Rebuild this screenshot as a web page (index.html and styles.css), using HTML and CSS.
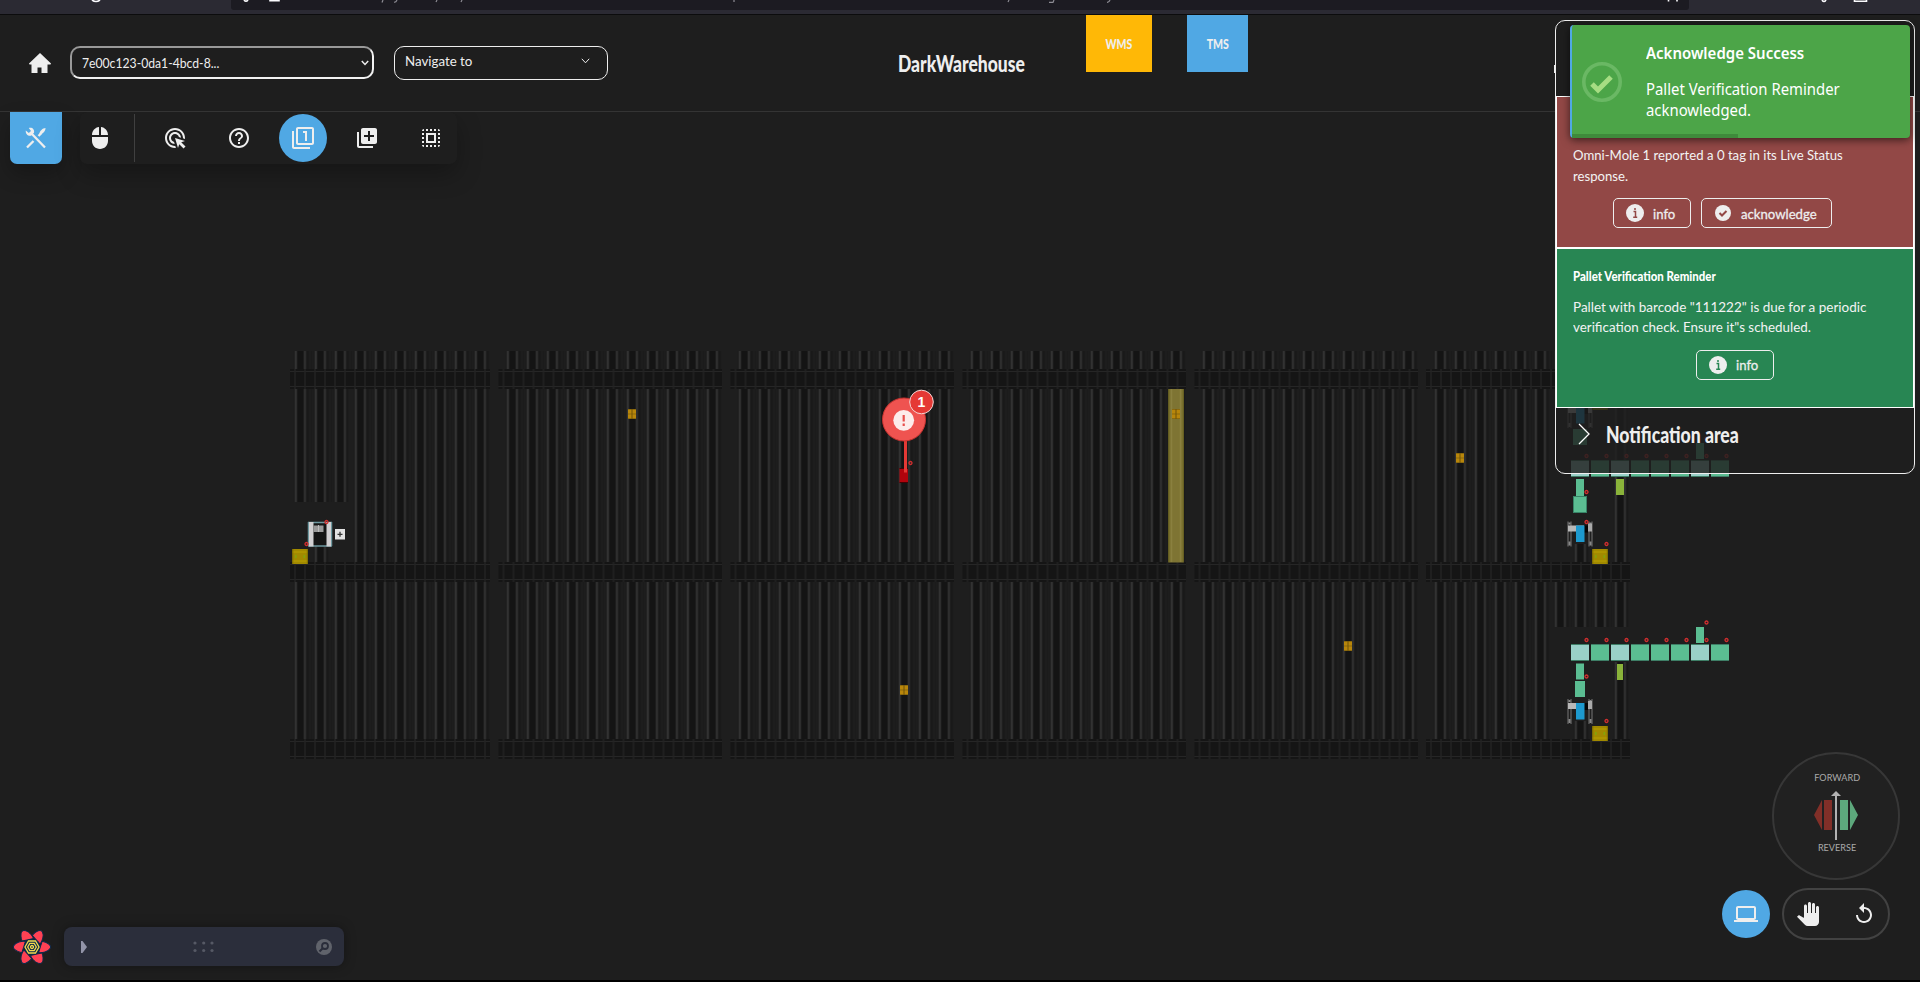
FILE: index.html
```html
<!DOCTYPE html>
<html lang="en">
<head>
<meta charset="utf-8">
<title>DarkWarehouse</title>
<link rel="stylesheet" href="styles.css">
</head>
<body>
<div class="chrome">
  <svg class="chrome-art" width="1920" height="15" viewBox="0 0 1920 15">
    <path class="bar" d="M231 0h1458v7q0 3-3 3H234q-3 0-3-3z"/>
    <g fill="none" stroke="#fbfbfe" stroke-width="1.6"><path d="M92 0q4 3 8 0M270 0v.8h9V0M244 0q2 2.5 4 0M1822 0q2 3 4 0M1854.500 0v1.200h12V0M1668.500 0v1.500M1677 0v1.500"/></g>
    <g fill="none" stroke="#8d8c94" stroke-width="1.200"><path d="M383 0l-1 2.500M397 0q-1 2.500-3 2.200M437 0l-1 2M462 0l-1 2M734 0v2M1009 0l-1 2M1049 2.400h4l1-2.400M1110 0q-1 2.500-3 2.300"/></g>
  </svg>
</div>

<svg class="map" width="1920" height="982" viewBox="0 0 1920 982">
  <defs>
    <pattern id="rail" patternUnits="userSpaceOnUse" x="0" y="0" width="20" height="40">
      <rect width="15.500" height="40" fill="#191919"/><rect x="3" width="8.500" height="40" fill="#141414"/>
      <rect x="1.500" width="1.800" height="40" fill="#3a3a3a"/><rect x="10.500" width="1.800" height="40" fill="#363636"/>
      <rect x="17" width="2" height="40" fill="#1b1b1b"/>
    </pattern>
    <pattern id="aisle" patternUnits="userSpaceOnUse" width="10" height="20">
      <rect width="10" height="20" fill="#151515"/>
      <path d="M0 2.500h10M0 17.500h10" stroke="#262626"/><path d="M5 0v20" stroke="#232323" stroke-width="1.400"/>
    </pattern>
    <g id="band"><rect width="223.500" height="20" fill="url(#aisle)"/></g>
    <g id="rows">
      <rect y="0" width="216" height="18" fill="url(#rail)"/>
      <rect y="38" width="216" height="173" fill="url(#rail)"/>
      <rect y="231" width="216" height="157" fill="url(#rail)"/>
      <use href="#band" x="-7" y="18"/><use href="#band" x="-7" y="211"/><use href="#band" x="-7" y="388"/>
    </g>
    <g id="crate"><rect width="8" height="10" fill="#b8860b"/><path d="M0 .5h8M0 9.500h8M0 5h8" stroke="#8d6a0c"/><path d="M4 0v10" stroke="#6f5208"/></g>
    <g id="pallet"><rect width="15.500" height="15" fill="#a28a00"/><path d="M0 3h15.500M0 12h15.500" stroke="#b89f00"/><path d="M3.500 6v3M12 6v3" stroke="#82a50c" stroke-width="1.500"/><path d="M.5 0v15M15 0v15" stroke="#806e00"/></g>
    <g id="tag"><circle r="1.500" fill="none" stroke="#d12f2f" stroke-width="1.300"/></g>
    <g id="lift">
      <path d="M1 0v25M4 0v25M22 0v25M25 0v25" stroke="#636363" stroke-width="1.300"/>
      <path d="M2.500 1v2M2.500 20v4M23.500 1v2M23.500 20v4" stroke="#888" stroke-width="2"/>
      <rect x="1" y="4" width="16" height="6" fill="#b8b8b8"/><rect x="21" y="2" width="4" height="8" fill="#aaa"/>
      <rect x="17" y="4" width="4" height="7" fill="#050505"/><rect x="9" y="4" width="8.500" height="16.500" fill="#1d99ce"/>
    </g>
    <g id="conveyor">
      <g stroke="#3e7e66" stroke-width="1"><g fill="#9ad0c8" stroke="none"><rect x="0" y="0" width="18" height="16"/><rect x="40" y="0" width="18" height="16"/><rect x="120" y="0" width="18" height="16"/></g>
      <g fill="#5bbd92" stroke="none"><rect x="20" y="0" width="18" height="16"/><rect x="60" y="0" width="18" height="16"/><rect x="80" y="0" width="18" height="16"/><rect x="100" y="0" width="18" height="16"/><rect x="140" y="0" width="18" height="16"/></g>
      <path d="M0 .5h18M20 .5h18M40 .5h18M60 .5h18M80 .5h18M100 .5h18M120 .5h18M140 .5h18M0 16.500h18M20 16.500h18M40 16.500h18M60 16.500h18M80 16.500h18M100 16.500h18M120 16.500h18M140 16.500h18"/></g>
      <rect x="125" y="-17" width="8" height="16" fill="#5bbd92"/>
      <use href="#tag" x="15.500" y="-4"/><use href="#tag" x="35.500" y="-4"/><use href="#tag" x="55.500" y="-4"/><use href="#tag" x="75.500" y="-4"/><use href="#tag" x="95.500" y="-4"/><use href="#tag" x="115.500" y="-4"/><use href="#tag" x="135.500" y="-4"/><use href="#tag" x="155.500" y="-4"/><use href="#tag" x="135.500" y="-21.500"/>
    </g>
  </defs>

  <!-- storage blocks -->
  <use href="#rows" x="505.500" y="351"/>
  <use href="#rows" x="737.500" y="351"/>
  <use href="#rows" x="969.500" y="351"/>
  <use href="#rows" x="1201.500" y="351"/>

  <g transform="translate(293.500 351)">
    <g fill="url(#rail)"><rect width="196" height="18"/><rect y="38" width="55" height="113"/><rect x="60" y="38" width="136" height="173"/><rect y="231" width="196" height="157"/><rect x="20" y="195" width="15" height="20"/></g>
    <g transform="translate(-3.500 18)"><rect width="200" height="20" fill="url(#aisle)"/></g>
    <g transform="translate(-3.500 211)"><rect width="200" height="20" fill="url(#aisle)"/></g>
    <g transform="translate(-3.500 388)"><rect width="200" height="20" fill="url(#aisle)"/></g>
  </g>

  <g transform="translate(1433.500 351)">
    <g fill="url(#rail)"><rect width="196" height="18"/><rect y="38" width="116" height="173"/><rect x="180" y="38" width="15" height="173"/><rect y="231" width="116" height="157"/><rect x="120" y="231" width="75" height="45"/><rect x="180" y="311" width="15" height="77"/><rect x="140" y="193" width="15" height="20"/><rect x="140" y="370" width="15" height="20"/></g>
    <g transform="translate(-7.500 18)"><rect width="204" height="20" fill="url(#aisle)"/></g>
    <g transform="translate(-7.500 211)"><rect width="204" height="20" fill="url(#aisle)"/></g>
    <g transform="translate(-7.500 388)"><rect width="204" height="20" fill="url(#aisle)"/></g>
  </g>

  <!-- highlighted lane and stored crates -->
  <rect x="1168.300" y="389" width="15.500" height="173.500" fill="#7e7433"/>
  <path d="M1171.500 389v173M1180.500 389v173" stroke="#8a803f" stroke-width="1.500"/><path d="M1168.800 389v173M1183.300 389v173" stroke="#666020"/>
  <use href="#crate" x="628" y="409"/><use href="#crate" x="1172" y="409"/><use href="#crate" x="900" y="685"/><use href="#crate" x="1344" y="641"/><use href="#crate" x="1456" y="453"/>

  <!-- left lift -->
  <use href="#pallet" x="292.300" y="549"/>
  <rect x="308" y="522" width="24" height="24" fill="#151515"/><path d="M308 522.500h24M308 546h24M308.500 522v24M331.500 522v24" stroke="#6c979e" stroke-width="1.500"/>
  <rect x="309" y="522" width="4.500" height="24.500" fill="#d2d0d2"/><rect x="326.500" y="522" width="4.500" height="24.500" fill="#d2d0d2"/>
  <rect x="313.500" y="525.500" width="10" height="6.500" fill="#999"/><path d="M318.500 525v7" stroke="#bbb"/>
  <rect x="335" y="529" width="10" height="10.500" fill="#e2e2e2"/><path d="M337.500 534.300h5M340 531.800v5" stroke="#333" stroke-width="1.300"/>
  <use href="#tag" x="326.500" y="522"/><use href="#tag" x="306.500" y="544"/>

  <!-- upper right station -->
  <use href="#lift" x="1567" y="403"/><use href="#pallet" x="1592.300" y="395"/>
  <rect x="1573" y="429" width="14" height="16" fill="#5bbd92"/>
  <use href="#conveyor" x="1571" y="460"/>
  <rect x="1576" y="479" width="8" height="17" fill="#5bbd92"/><rect x="1573.500" y="496.500" width="13" height="16" fill="#5bbd92" stroke="#388467"/>
  <rect x="1616" y="479" width="8" height="16" fill="#8ab33a"/>
  <use href="#lift" x="1567" y="521.500"/><use href="#pallet" x="1592.300" y="549"/>
  <use href="#tag" x="1586.500" y="492"/><use href="#tag" x="1586.500" y="522"/><use href="#tag" x="1606.500" y="544"/>

  <!-- lower right station -->
  <use href="#conveyor" x="1571" y="644"/>
  <rect x="1576" y="663.500" width="8" height="16" fill="#5bbd92"/><rect x="1575" y="681" width="10" height="16" fill="#5bbd92"/>
  <rect x="1617" y="664" width="6" height="16" fill="#8ab33a"/>
  <use href="#lift" x="1567" y="699"/><use href="#pallet" x="1592.300" y="726"/>
  <use href="#tag" x="1586.500" y="676.500"/><use href="#tag" x="1606.500" y="721"/>

  <!-- alarm marker -->
  <rect x="899.500" y="468" width="8.500" height="15" fill="#b1040d"/><path d="M899.500 468.500h8.500M899.500 482.500h8.500" stroke="#410205"/>
  <path d="M905.500 440v32.500" stroke="#e53935" stroke-width="3"/><use href="#tag" x="910.500" y="463"/>
  <circle cx="904" cy="419.500" r="21.500" fill="#ef5350" stroke="#c93330"/><circle cx="903.700" cy="420.300" r="10.400" fill="#fdeceb"/>
  <path d="M903.700 415v6.500M903.700 423.500v2.500" stroke="#e8504d" stroke-width="2.200"/>
  <circle cx="921.500" cy="402" r="11.800" fill="#e53935" stroke="#f4d6d5"/>
  <text class="badge-text" x="921.300" y="407">1</text>
</svg>

<header class="header">
  <svg class="home" width="22" height="20" viewBox="0 0 22 20"><path d="M11 0L0 10.500c0 .8.600 1 1.200 1H2.500V20h6v-5.500h4V20h6v-8.500H21c.8 0 1-.7 1-1z"/></svg>
  <div class="select session"><span class="t-session">7e00c123-0da1-4bcd-8...</span><svg width="8" height="6" viewBox="0 0 8 6"><path d="M.8 1L4 4.500 7.200 1"/></svg></div>
  <div class="select nav"><span class="t-nav">Navigate to</span><svg width="9" height="6" viewBox="0 0 9 6"><path d="M.8.800L4.500 4.800 8.200.800"/></svg></div>
  <h1 class="title"><span>DarkWarehouse</span></h1>
  <div class="tab wms"><span>WMS</span></div>
  <div class="tab tms"><span>TMS</span></div>
  <div class="account"></div>
</header>

<div class="toolrow">
  <button class="tools"><svg width="22" height="22" viewBox="0 0 22 22"><g fill="none" stroke="#eee" stroke-width="2.300"><path d="M6 6L20 20.500M2 20.500l6.500-6.500M13.500 9l3-3"/></g><path d="M.8 3.500l3 2.500L6 4 3.800 1c3.500-.8 6 1.500 5.200 4.800L6 8.700C3 9.300.3 6.800.8 3.500zM14.300 7C14.600 4 17.800 1 20.500 1c.2 2.500-2.300 5.800-5.200 6.500z" fill="#eee"/></svg></button>
  <div class="toolbar">
    <div class="mouse"><svg class="ic" viewBox="0 0 24 24"><path d="M13 1.070V9h7c0-4.080-3.050-7.440-7-7.930zM4 15c0 4.420 3.580 8 8 8s8-3.580 8-8v-4H4v4zm7-13.930C7.050 1.560 4 4.920 4 9h7V1.070z"/></svg></div>
    <div class="tool"><svg class="ic" viewBox="0 0 24 24"><path d="M11.710 17.990C8.530 17.840 6 15.220 6 12c0-3.310 2.690-6 6-6 3.220 0 5.840 2.530 5.990 5.710l-2.100-.63C15.480 9.310 13.890 8 12 8c-2.210 0-4 1.790-4 4 0 1.890 1.310 3.480 3.080 3.890l.63 2.100zM22 12c0 .3-.01.6-.04.9l-1.970-.59c.01-.1.01-.21.01-.31 0-4.420-3.580-8-8-8s-8 3.580-8 8 3.580 8 8 8c.1 0 .21 0 .31-.01l.59 1.970c-.3.030-.6.040-.9.040-5.520 0-10-4.480-10-10S6.480 2 12 2s10 4.480 10 10zm-3.770 4.260L22 15l-10-3 3 10 1.260-3.770 4.270 4.270 1.980-1.980-4.280-4.260z"/></svg></div>
    <div class="tool"><svg class="ic" viewBox="0 0 24 24"><path d="M11 18h2v-2h-2v2zm1-16C6.480 2 2 6.480 2 12s4.480 10 10 10 10-4.480 10-10S17.520 2 12 2zm0 18c-4.410 0-8-3.590-8-8s3.590-8 8-8 8 3.590 8 8-3.590 8-8 8zm0-14c-2.210 0-4 1.790-4 4h2c0-1.100.9-2 2-2s2 .9 2 2c0 2-3 1.750-3 5h2c0-2.250 3-2.500 3-5 0-2.210-1.790-4-4-4z"/></svg></div>
    <div class="tool active"><svg class="ic" viewBox="0 0 24 24"><path d="M3 5H1v16c0 1.100.9 2 2 2h16v-2H3V5zm11 10h2V5h-4v2h2v8zm7-14H7c-1.100 0-2 .9-2 2v14c0 1.100.9 2 2 2h14c1.100 0 2-.9 2-2V3c0-1.100-.9-2-2-2zm0 16H7V3h14v14z"/></svg></div>
    <div class="tool"><svg class="ic" viewBox="0 0 24 24"><path d="M4 6H2v14c0 1.100.9 2 2 2h14v-2H4V6zm16-4H8c-1.100 0-2 .9-2 2v12c0 1.100.9 2 2 2h12c1.100 0 2-.9 2-2V4c0-1.100-.9-2-2-2zm-1 9h-4v4h-2v-4H9V9h4V5h2v4h4v2z"/></svg></div>
    <div class="tool"><svg class="ic" viewBox="0 0 24 24"><path d="M3 5h2V3c-1.100 0-2 .9-2 2zm0 8h2v-2H3v2zm4 8h2v-2H7v2zM3 9h2V7H3v2zm10-6h-2v2h2V3zm6 0v2h2c0-1.100-.9-2-2-2zM5 21v-2H3c0 1.100.9 2 2 2zm-2-4h2v-2H3v2zM9 3H7v2h2V3zm2 18h2v-2h-2v2zm8-8h2v-2h-2v2zm0 8c1.100 0 2-.9 2-2h-2v2zm0-12h2V7h-2v2zm0 8h2v-2h-2v2zm-4 4h2v-2h-2v2zm0-16h2V3h-2v2zM7 17h10V7H7v10zm2-8h6v6H9V9z"/></svg></div>
  </div>
</div>

<aside class="notifications">
  <section class="card alert">
    <p><span class="t-a1">Omni-Mole 1 reported a 0 tag in its Live Status</span><br><span class="t-a2">response.</span></p>
    <div class="actions">
      <button class="btn info"><svg width="18" height="18" viewBox="0 0 18 18"><circle cx="9" cy="9" r="9"/><path d="M7.500 7.500h2V13M7.200 13.200h4M9 4v2" fill="none" stroke="#924846" stroke-width="1.500"/></svg><span>info</span></button>
      <button class="btn ack"><svg width="16" height="16" viewBox="0 0 16 16"><circle cx="8" cy="8" r="8"/><path d="M4.500 8l2.500 2.500 4.500-4.500" fill="none" stroke="#924846" stroke-width="2"/></svg><span>acknowledge</span></button>
    </div>
  </section>
  <section class="card reminder">
    <h2><span>Pallet Verification Reminder</span></h2>
    <p><span class="t-b1">Pallet with barcode "111222" is due for a periodic</span><br><span class="t-b2">verification check. Ensure it"s scheduled.</span></p>
    <div class="actions">
      <button class="btn info"><svg width="18" height="18" viewBox="0 0 18 18"><circle cx="9" cy="9" r="9"/><path d="M7.500 7.500h2V13M7.200 13.200h4M9 4v2" fill="none" stroke="#288653" stroke-width="1.500"/></svg><span>info</span></button>
    </div>
  </section>
  <footer class="area"><svg width="12" height="22" viewBox="0 0 12 22"><path d="M1 1l10 10L1 21"/></svg><span>Notification area</span></footer>
</aside>

<div class="toast">
  <svg class="toast-icon" width="40" height="40" viewBox="0 0 40 40"><circle cx="20" cy="20" r="18.200" fill="none" stroke="#6ab864" stroke-width="3.600"/><path d="M10 22l6 6L29 15" fill="none" stroke="#a6dd83" stroke-width="5"/></svg>
  <div class="toast-body"><strong><span>Acknowledge Success</span></strong><p><span>Pallet Verification Reminder</span><br><span>acknowledged.</span></p></div>
  <div class="progress"></div>
</div>

<div class="compass">
  <span class="fwd">FORWARD</span>
  <svg width="44" height="50" viewBox="0 0 44 50"><path d="M8 9v30L0 24zM10 9h8v30h-8z" fill="#812f28"/><path d="M26 9h8v30h-8zM36 9v30l8-15z" fill="#5da87c"/><path d="M22 4v45" stroke="#b2b2b2" stroke-width="2"/><path d="M17 5l5-5 5 5z" fill="#b2b2b2"/></svg>
  <span class="rev">REVERSE</span>
</div>

<div class="view-controls">
  <div class="screen"><svg class="ic" viewBox="0 0 24 24"><path d="M20 18c1.100 0 1.990-.9 1.990-2L22 6c0-1.100-.9-2-2-2H4c-1.100 0-2 .9-2 2v10c0 1.100.9 2 2 2H0v2h24v-2h-4zM4 6h16v10H4V6z"/></svg></div>
  <div class="pill">
    <svg class="ic" viewBox="0 0 24 24"><path d="M23 5.500V20c0 2.200-1.800 4-4 4h-7.300c-1.080 0-2.100-.43-2.850-1.190L1 14.830s1.260-1.230 1.300-1.250c.22-.19.49-.29.79-.29.22 0 .42.060.6.160.04.010 4.310 2.460 4.310 2.460V4c0-.83.67-1.500 1.500-1.500S11 3.170 11 4v7h1V1.500c0-.83.67-1.500 1.500-1.500S15 .67 15 1.500V11h1V2.500c0-.83.67-1.500 1.500-1.500s1.500.67 1.500 1.500V11h1V5.500c0-.83.67-1.500 1.500-1.500s1.500.67 1.500 1.500z"/></svg>
    <svg class="ic" viewBox="0 0 24 24"><path d="M12 5V1L7 6l5 5V7c3.310 0 6 2.690 6 6s-2.690 6-6 6-6-2.690-6-6H4c0 4.420 3.580 8 8 8s8-3.580 8-8-3.580-8-8-8z"/></svg>
  </div>
</div>

<div class="dock">
  <svg width="40" height="38" viewBox="-20 -19 40 38">
    <defs><path id="petal" d="M-10-6C-12-12-11-16.500-8-16.500-4-16.500 0-12 1.500-8.500L-5-7z"/></defs>
    <g fill="#ff4154" stroke="#0b2a4a" stroke-width="1"><use href="#petal"/><use href="#petal" transform="rotate(60)"/><use href="#petal" transform="rotate(120)"/><use href="#petal" transform="rotate(180)"/><use href="#petal" transform="rotate(240)"/><use href="#petal" transform="rotate(300)"/></g>
    <circle r="8" fill="#0b2a4a"/><g fill="none" stroke="#f2d94e" stroke-width="1.300"><path d="M-7 0L-3.500-6h7L7 0 3.500 6h-7zM-4.300 0l2.100-3.600h4.400L4.300 0 2.200 3.600h-4.400z"/><circle r="1.500"/></g>
  </svg>
  <div class="player">
    <svg width="6" height="12" viewBox="0 0 6 12"><path d="M0 0h1.500L6 6 1.500 12H0z" fill="#9294a8"/></svg>
    <svg class="grip" width="22" height="12" viewBox="0 0 22 12"><g fill="#565965"><circle cx="2" cy="2" r="1.600"/><circle cx="10.700" cy="2" r="1.600"/><circle cx="19" cy="2" r="1.600"/><circle cx="2" cy="9.500" r="1.600"/><circle cx="10.700" cy="9.500" r="1.600"/><circle cx="19" cy="9.500" r="1.600"/></g></svg>
    <svg width="16" height="16" viewBox="0 0 16 16"><circle cx="8" cy="8" r="8" fill="#60636b"/><circle cx="9" cy="7" r="3" fill="none" stroke="#2a2d3a" stroke-width="1.800"/><path d="M7 9l-3.500 3.500" stroke="#2a2d3a" stroke-width="2.200"/></svg>
  </div>
</div>
</body>
</html>
```
FILE: styles.css
```css
* { box-sizing: border-box; }
body { margin: 0; width: 1920px; height: 982px; overflow: hidden; position: relative; background: #1e1e1e; color: #eee; font-family: Lato, "Open Sans", sans-serif; border-bottom: 2px solid #000; }
h1, h2, p { margin: 0; }
button { font: inherit; color: inherit; background: none; border: 0; padding: 0; }
svg { display: block; flex: none; }
span { display: inline-block; white-space: nowrap; transform-origin: left center; }
.ic { width: 24px; height: 24px; fill: #eee; }

.chrome { height: 15px; background: #2b2a33; border-bottom: 1px solid #0c0c0d; }
.chrome .bar { fill: #1c1b22; }
.map { position: absolute; left: 0; top: 0; }
.badge-text { font: bold 14px "Liberation Sans", sans-serif; fill: #fff; text-anchor: middle; }

.header { position: relative; height: 97px; display: flex; align-items: flex-start; border-bottom: 1px solid #343434; }
.home { margin: 38px 19px 0 29px; fill: #eee; }
.select { display: flex; justify-content: space-between; border-radius: 10px; font-size: 14px; }
.select path { fill: none; stroke: #eee; stroke-width: 1.5; }
.session { width: 304px; height: 33px; margin: 31px 20px 0 0; padding: 0 3px 0 10px; align-items: center; border: 2px solid #f2f2f2; border-top-color: #999; border-left-color: #999; }
.t-session { transform: scaleX(.87); }
.nav { width: 214px; height: 34px; margin-top: 31px; padding: 5px 17px 0 10px; border: 1px solid #eee; line-height: 17px; }
.t-nav { transform: scaleX(.95); }
.nav svg { margin-top: 6px; }
.nav path { stroke-width: 1; }
.title { width: 126px; margin: 35px 0 0 290px; font-size: 22px; line-height: 28px; font-weight: 900; }
.title span { transform: scaleX(.795); }
.tab { height: 57px; display: flex; align-items: center; justify-content: center; font-size: 14px; font-weight: 900; }
.tab span { transform-origin: center; transform: scaleX(.75); }
.wms { width: 66px; margin-left: 62px; background: #ffb806; }
.tms { width: 61px; margin-left: 35px; background: #50a8e4; }
.account { width: 2px; height: 8px; margin: 50px 0 0 306px; background: #eee; }

.toolrow { position: relative; display: flex; gap: 18px; padding-left: 10px; }
.tools { width: 52px; height: 52px; display: flex; align-items: center; justify-content: center; background: #50a8e4; border-radius: 0 0 7px 7px; box-shadow: 0 10px 20px rgba(0,0,0,.25); }
.toolbar { width: 377px; height: 52px; display: flex; align-items: center; gap: 16px; background: #1e1e1e; border-radius: 7px; box-shadow: 0 10px 25px rgba(0,0,0,.28); clip-path: inset(0 -40px -50px -40px); }
.mouse { width: 55px; height: 48px; padding-left: 8px; display: flex; align-items: center; border-right: 1px solid #404040; }
.tool { width: 48px; height: 48px; display: flex; align-items: center; justify-content: center; border-radius: 50%; }
.active { background: #50a8e4; }

.notifications { position: absolute; left: 1555px; top: 20px; width: 360px; height: 454px; padding-top: 75px; border: 1px solid #eee; border-radius: 10px; background: rgba(30,30,30,.82); }
.card { border: 1px solid #fff; padding: 0 16px; font-size: 14px; color: #f3f3f3; }
.alert { height: 152px; padding-top: 47px; line-height: 21px; background: #924846; }
.reminder { height: 160px; padding-top: 17px; line-height: 20px; background: #288653; }
.reminder h2 { font-size: 13px; line-height: 20px; font-weight: 900; margin-bottom: 11px; color: #fff; }
.reminder h2 span { transform: scaleX(.88); }
.t-a1 { transform: scaleX(.94); }
.t-a2 { transform: scaleX(.94); }
.t-b1 { transform: scaleX(.964); }
.t-b2 { transform: scaleX(.956); }
.actions { display: flex; justify-content: center; gap: 10px; margin-top: 13px; }
.alert .actions { margin-top: 12px; padding-right: 26px; }
.btn { height: 30px; display: flex; align-items: center; border: 1px solid #eee; border-radius: 5px; color: #eee; }
.btn svg { fill: #eee; }
.btn span { transform: scaleX(.94); -webkit-text-stroke: .3px #eee; }
.info { width: 78px; padding-left: 12px; gap: 9px; }
.ack { width: 131px; padding-left: 13px; gap: 10px; }
.area { display: flex; align-items: center; height: 52px; padding-left: 22px; gap: 16px; font-size: 22px; font-weight: 900; }
.area path { fill: none; stroke: #fff; stroke-width: 1.3; }
.area span { transform: scaleX(.8); }

.toast { position: absolute; left: 1570px; top: 25px; width: 340px; height: 113px; display: flex; align-items: center; padding-left: 10px; gap: 24px; background: #4ca548; border-left: 2px solid #50a8e4; border-radius: 4px; box-shadow: 0 2px 8px rgba(0,0,0,.6); color: #fff; font: 16px/21px "Noto Sans", sans-serif; }
.toast strong { display: block; font-weight: 600; margin-bottom: 15px; }
.toast strong span { transform: scaleX(.937); }
.toast p span { transform: scaleX(.93); }
.progress { position: absolute; left: 0; bottom: 0; width: 166px; height: 4px; background: #3f8a3b; }

.compass { position: absolute; left: 1772px; top: 752px; width: 128px; height: 128px; border: 2px solid #373737; border-radius: 50%; display: flex; flex-direction: column; align-items: center; padding-top: 17px; font-size: 10px; line-height: 13px; color: #aaa; background: #212121; }
.compass svg { margin: 7px 0 0; }
.compass span { margin-left: 3px; transform-origin: center; transform: scaleX(.91); }
.view-controls { position: absolute; left: 1722px; top: 888px; display: flex; align-items: center; gap: 12px; }
.screen { width: 48px; height: 48px; border-radius: 50%; background: #50a8e4; display: flex; align-items: center; justify-content: center; }
.pill { width: 108px; height: 52px; border: 2px solid #424242; border-radius: 26px; display: flex; align-items: center; justify-content: space-between; padding: 0 12px; background: #212121; }

.dock { position: absolute; left: 12px; top: 927px; display: flex; align-items: center; gap: 12px; }
.player { width: 280px; height: 39px; display: flex; align-items: center; justify-content: space-between; padding: 0 12px 0 17px; border-radius: 8px; background: #2b2e3b; box-shadow: 0 0 12px rgba(0,0,0,.35); }
.grip { margin-left: 4px; }
```
